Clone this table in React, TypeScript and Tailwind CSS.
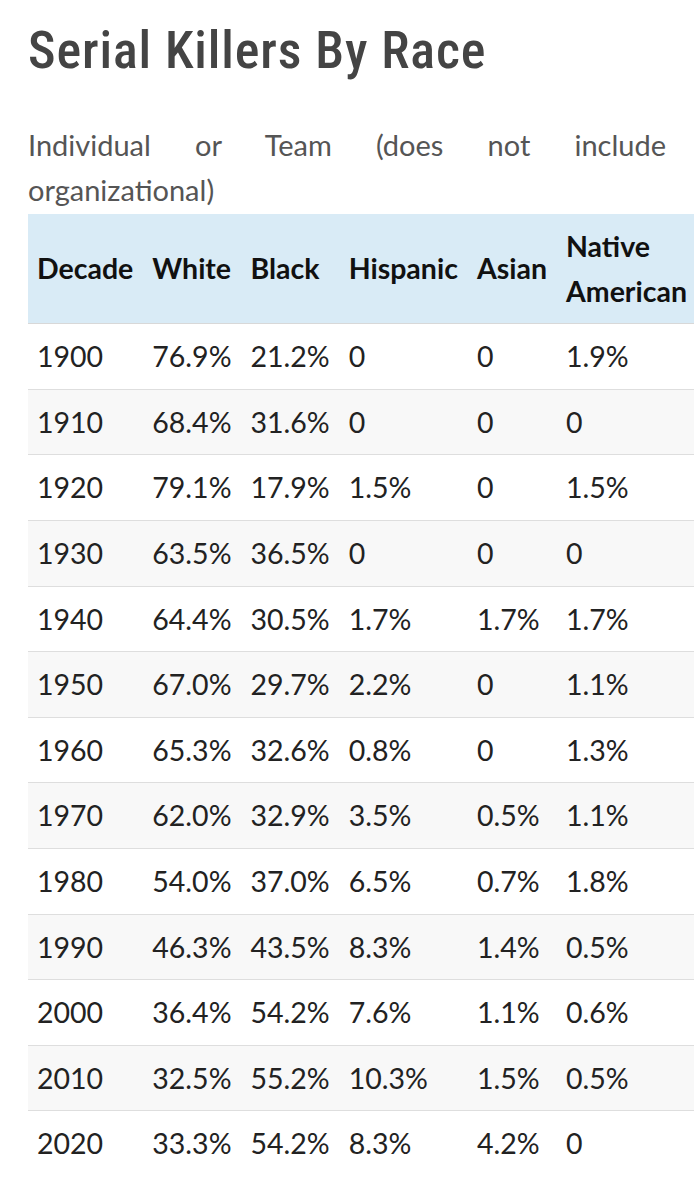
import React from "react";

const rows: string[][] = [
  ["1900", "76.9%", "21.2%", "0", "0", "1.9%"],
  ["1910", "68.4%", "31.6%", "0", "0", "0"],
  ["1920", "79.1%", "17.9%", "1.5%", "0", "1.5%"],
  ["1930", "63.5%", "36.5%", "0", "0", "0"],
  ["1940", "64.4%", "30.5%", "1.7%", "1.7%", "1.7%"],
  ["1950", "67.0%", "29.7%", "2.2%", "0", "1.1%"],
  ["1960", "65.3%", "32.6%", "0.8%", "0", "1.3%"],
  ["1970", "62.0%", "32.9%", "3.5%", "0.5%", "1.1%"],
  ["1980", "54.0%", "37.0%", "6.5%", "0.7%", "1.8%"],
  ["1990", "46.3%", "43.5%", "8.3%", "1.4%", "0.5%"],
  ["2000", "36.4%", "54.2%", "7.6%", "1.1%", "0.6%"],
  ["2010", "32.5%", "55.2%", "10.3%", "1.5%", "0.5%"],
  ["2020", "33.3%", "54.2%", "8.3%", "4.2%", "0"],
];

const headers = ["Decade", "White", "Black", "Hispanic", "Asian", "Native American"];

export default function App() {
  return (
    <div className="w-[694px] h-[1200px] overflow-hidden bg-white">
      <div className="w-[638px] ml-[28px] pt-[20px]">
        <h1 className="font-['Roboto_Condensed','Roboto',sans-serif] font-medium text-[52px] leading-[62px] text-[#444444] tracking-[0.9px]">
          Serial Killers By Race
        </h1>
        <p className="mt-[40px] mb-[2px] font-['Lato',sans-serif] text-[29px] leading-[45px] text-[#555555] text-justify">
          Individual or Team (does not include organizational)
        </p>
        <table className="w-full border-collapse font-['Lato',sans-serif] text-[28.5px] leading-[44.6px]">
          <thead>
            <tr className="bg-[#d9ebf6]">
              {headers.map((h) => (
                <th
                  key={h}
                  className="text-left align-middle font-bold text-[#111111] pl-[9px] pr-[10px] py-[10px] border-b border-[#d8d8d8]"
                >
                  {h}
                </th>
              ))}
            </tr>
          </thead>
          <tbody>
            {rows.map((r, i) => (
              <tr key={r[0]} className={i % 2 === 1 ? "bg-[#f8f8f8]" : "bg-white"}>
                {r.map((c, j) => (
                  <td
                    key={j}
                    className={
                      "text-left align-middle text-[#222222] pl-[9px] pr-[10px] py-[10px] whitespace-nowrap " +
                      (i === rows.length - 1 ? "" : "border-b border-[#dedede]")
                    }
                  >
                    {c}
                  </td>
                ))}
              </tr>
            ))}
          </tbody>
        </table>
      </div>
    </div>
  );
}
